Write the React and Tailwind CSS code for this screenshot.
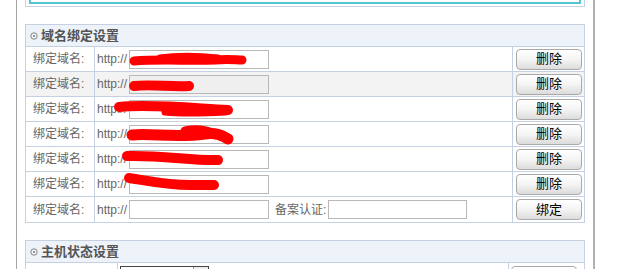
import React from 'react';

const rows = [
  { gray: false, disabled: false },
  { gray: true, disabled: true },
  { gray: false, disabled: false },
  { gray: false, disabled: false },
  { gray: false, disabled: false },
  { gray: false, disabled: false },
];

function Btn({ children }) {
  return (
    <div className="ml-[3px] flex h-[21px] w-[66px] items-center justify-center rounded-[4px] border border-[#a9a9a9] bg-gradient-to-b from-white via-[#f4f4f4] to-[#dcdcdc] text-[13px] text-black">
      {children}
    </div>
  );
}

function Header({ title }) {
  return (
    <div className="flex h-[22px] items-center border-b border-[#c5d1e2] bg-[#eef3fa] pl-[4px] text-[13px] font-bold text-[#555]">
      <svg width="8" height="8" viewBox="0 0 8 8" className="mr-[3px]">
        <circle cx="4" cy="4" r="3.2" fill="none" stroke="#777" strokeWidth="0.9" />
        <circle cx="4" cy="4" r="1" fill="#777" />
      </svg>
      {title}
    </div>
  );
}

function DomainRow({ gray, disabled, last }) {
  return (
    <div className={`flex h-[25px] ${last ? '' : 'border-b border-[#c5d1e2]'} ${gray ? 'bg-[#f3f3f3]' : ''}`}>
      <div className="flex w-[69px] items-center border-r border-[#c5d1e2] pl-[7px] text-[12px] text-[#666]">绑定域名:</div>
      <div className="flex w-[418px] items-center border-r border-[#c5d1e2] pl-[2px] text-[12px] text-[#666]">
        <span className="w-[32px]">http://</span>
        <div className={`h-[19px] w-[140px] border border-[#b8b8b8] ${disabled ? 'bg-[#efefef]' : 'bg-white'}`} />
        {last && (
          <>
            <span className="ml-[6px] w-[53px]">备案认证:</span>
            <div className="h-[19px] w-[139px] border border-[#b8b8b8] bg-white" />
          </>
        )}
      </div>
      <div className="flex flex-1 items-center">
        <Btn>{last ? '绑定' : '删除'}</Btn>
      </div>
    </div>
  );
}

export default function App() {
  return (
    <div
      className="relative flex h-[269px] w-[643px] overflow-hidden bg-white"
      style={{ fontFamily: '"Liberation Sans", "Noto Sans CJK SC", sans-serif' }}
    >
      <div className="ml-[16px] h-full w-[579px] border-l border-r-2 border-l-[#a4a4a4] border-r-[#b0b0b0] pl-[8px]">
        <div className="h-[7px] w-[560px] border-x border-b border-[#c5d1e2] px-[3px]">
          <div className="h-[4px] border-x-2 border-b-2 border-[#55c5cf]" />
        </div>

        <div className="mt-[17px] w-[560px] border border-[#c5d1e2]">
          <Header title="域名绑定设置" />
          {rows.map((r, i) => (
            <DomainRow key={i} gray={r.gray} disabled={r.disabled} />
          ))}
          <DomainRow last />
        </div>

        <div className="mt-[17px] w-[560px] border border-[#c5d1e2]">
          <Header title="主机状态设置" />
          <div className="flex h-[30px]">
            <div className="w-[92px] border-r border-[#c5d1e2]" />
            <div className="w-[391px] border-r border-[#c5d1e2] pl-[2px] pt-[3px]">
              <div className="flex h-[20px] w-[89px] border border-[#444]">
                <div className="flex-1" />
                <div className="w-[15px] border-l border-[#999] bg-[#eee]" />
              </div>
            </div>
            <div className="pt-[3px]">
              <div className="ml-[2px] h-[21px] w-[66px] rounded-[4px] border border-[#a9a9a9] bg-white" />
            </div>
          </div>
        </div>
      </div>

      <svg className="pointer-events-none absolute left-0 top-0" width="643" height="269" viewBox="0 0 643 269">
        <g stroke="#ff0000" strokeLinecap="round" strokeLinejoin="round" fill="none">
          <path d="M134 61 C160 59 190 61 215 60 C228 59 236 60 242 60" strokeWidth="9" />
          <path d="M160 58 C180 55 200 56 218 58" strokeWidth="7" />
          <path d="M134 86 C150 84 170 87 189 86" strokeWidth="10" />
          <path d="M119 107 C150 104 190 108 228 110" strokeWidth="10" />
          <path d="M165 112 C185 114 205 113 226 112" strokeWidth="7" />
          <path d="M132 135 C150 133 175 138 205 134 C215 132 224 136 228 139" strokeWidth="11" />
          <path d="M185 131 C195 129 205 130 212 133" strokeWidth="9" />
          <path d="M127 156 C160 155 195 161 218 160" strokeWidth="10" />
          <path d="M129 178 C150 181 170 186 195 185 C205 185 210 185 214 185" strokeWidth="10" />
        </g>
      </svg>
    </div>
  );
}
